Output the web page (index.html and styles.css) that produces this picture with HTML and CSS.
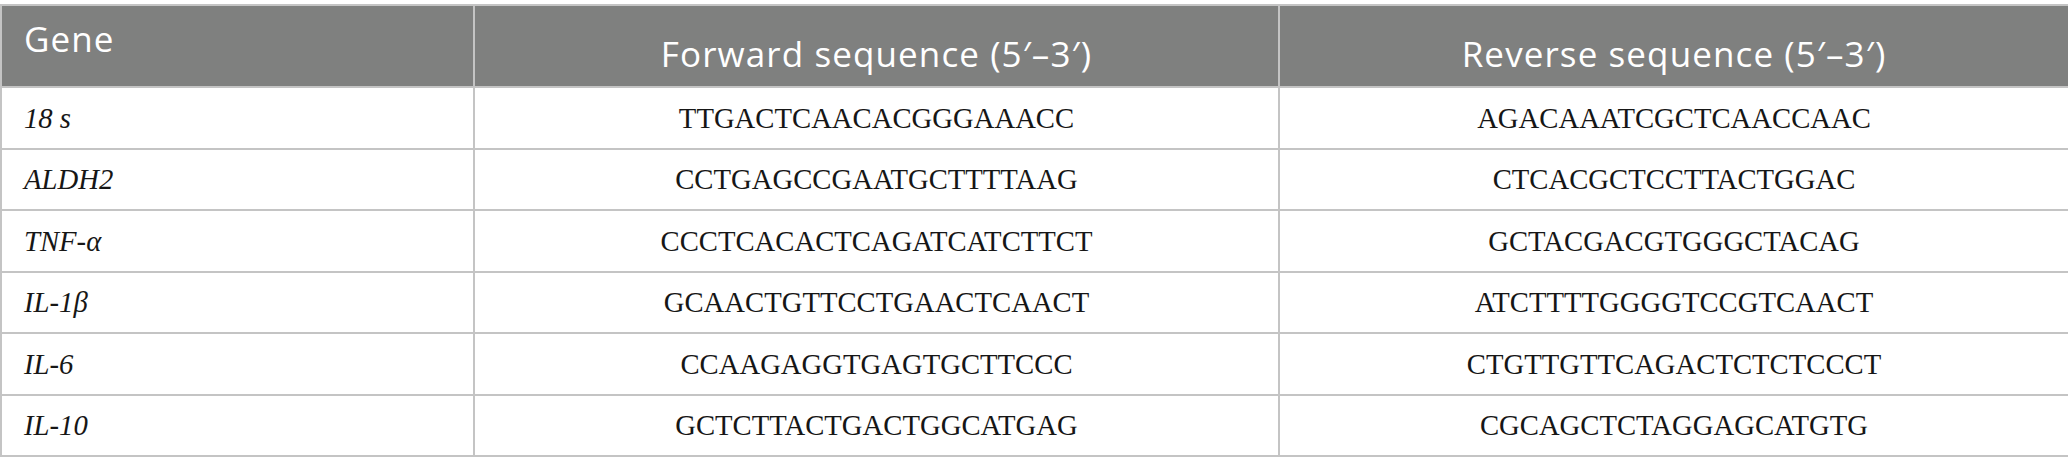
FILE: index.html
```html
<!DOCTYPE html>
<html lang="en">
<head>
<meta charset="utf-8">
<title>Primer sequences</title>
<link rel="stylesheet" href="styles.css">
</head>
<body>
<table class="primers">
  <colgroup>
    <col class="c-gene">
    <col class="c-fwd">
    <col class="c-rev">
  </colgroup>
  <thead>
    <tr>
      <th class="h-gene">Gene</th>
      <th class="h-seq">Forward sequence (5′–3′)</th>
      <th class="h-seq">Reverse sequence (5′–3′)</th>
    </tr>
  </thead>
  <tbody>
    <tr><td class="gene">18 s</td><td class="seq">TTGACTCAACACGGGAAACC</td><td class="seq">AGACAAATCGCTCAACCAAC</td></tr>
    <tr><td class="gene">ALDH2</td><td class="seq">CCTGAGCCGAATGCTTTTAAG</td><td class="seq">CTCACGCTCCTTACTGGAC</td></tr>
    <tr><td class="gene">TNF-α</td><td class="seq">CCCTCACACTCAGATCATCTTCT</td><td class="seq">GCTACGACGTGGGCTACAG</td></tr>
    <tr><td class="gene">IL-1β</td><td class="seq">GCAACTGTTCCTGAACTCAACT</td><td class="seq">ATCTTTTGGGGTCCGTCAACT</td></tr>
    <tr><td class="gene">IL-6</td><td class="seq">CCAAGAGGTGAGTGCTTCCC</td><td class="seq">CTGTTGTTCAGACTCTCTCCCT</td></tr>
    <tr><td class="gene">IL-10</td><td class="seq">GCTCTTACTGACTGGCATGAG</td><td class="seq">CGCAGCTCTAGGAGCATGTG</td></tr>
  </tbody>
</table>
</body>
</html>
```

FILE: styles.css
```css
html, body {
  margin: 0;
  padding: 0;
  background: #ffffff;
}

body {
  padding-top: 4px;
}

.primers {
  width: 2068px;
  border-collapse: collapse;
  table-layout: fixed;
  border: 2px solid #c4c4c4;
}

.c-gene { width: 473px; }
.c-fwd { width: 805px; }
.c-rev { width: 790px; }

.primers th,
.primers td {
  border: 2px solid #c4c4c4;
  padding: 0;
}

.primers th {
  background: #7f807f;
  color: #ffffff;
  font-family: "Open Sans", "Noto Sans", sans-serif;
  font-weight: 400;
  font-size: 35px;
  letter-spacing: 1.1px;
  line-height: 40px;
  height: 82px;
  box-sizing: border-box;
}

.primers .h-gene {
  text-align: left;
  vertical-align: top;
  padding: 13px 0 0 22px;
}

.primers .h-seq {
  text-align: center;
  vertical-align: bottom;
  padding-bottom: 12px;
}

.primers td {
  font-family: "Liberation Serif", "Times New Roman", serif;
  font-size: 28.7px;
  color: #161616;
  height: 61.5px;
  box-sizing: border-box;
  vertical-align: middle;
  line-height: 32px;
}

.primers .gene {
  font-style: italic;
  text-align: left;
  padding-left: 22px;
}

.primers .seq {
  text-align: center;
}
```
